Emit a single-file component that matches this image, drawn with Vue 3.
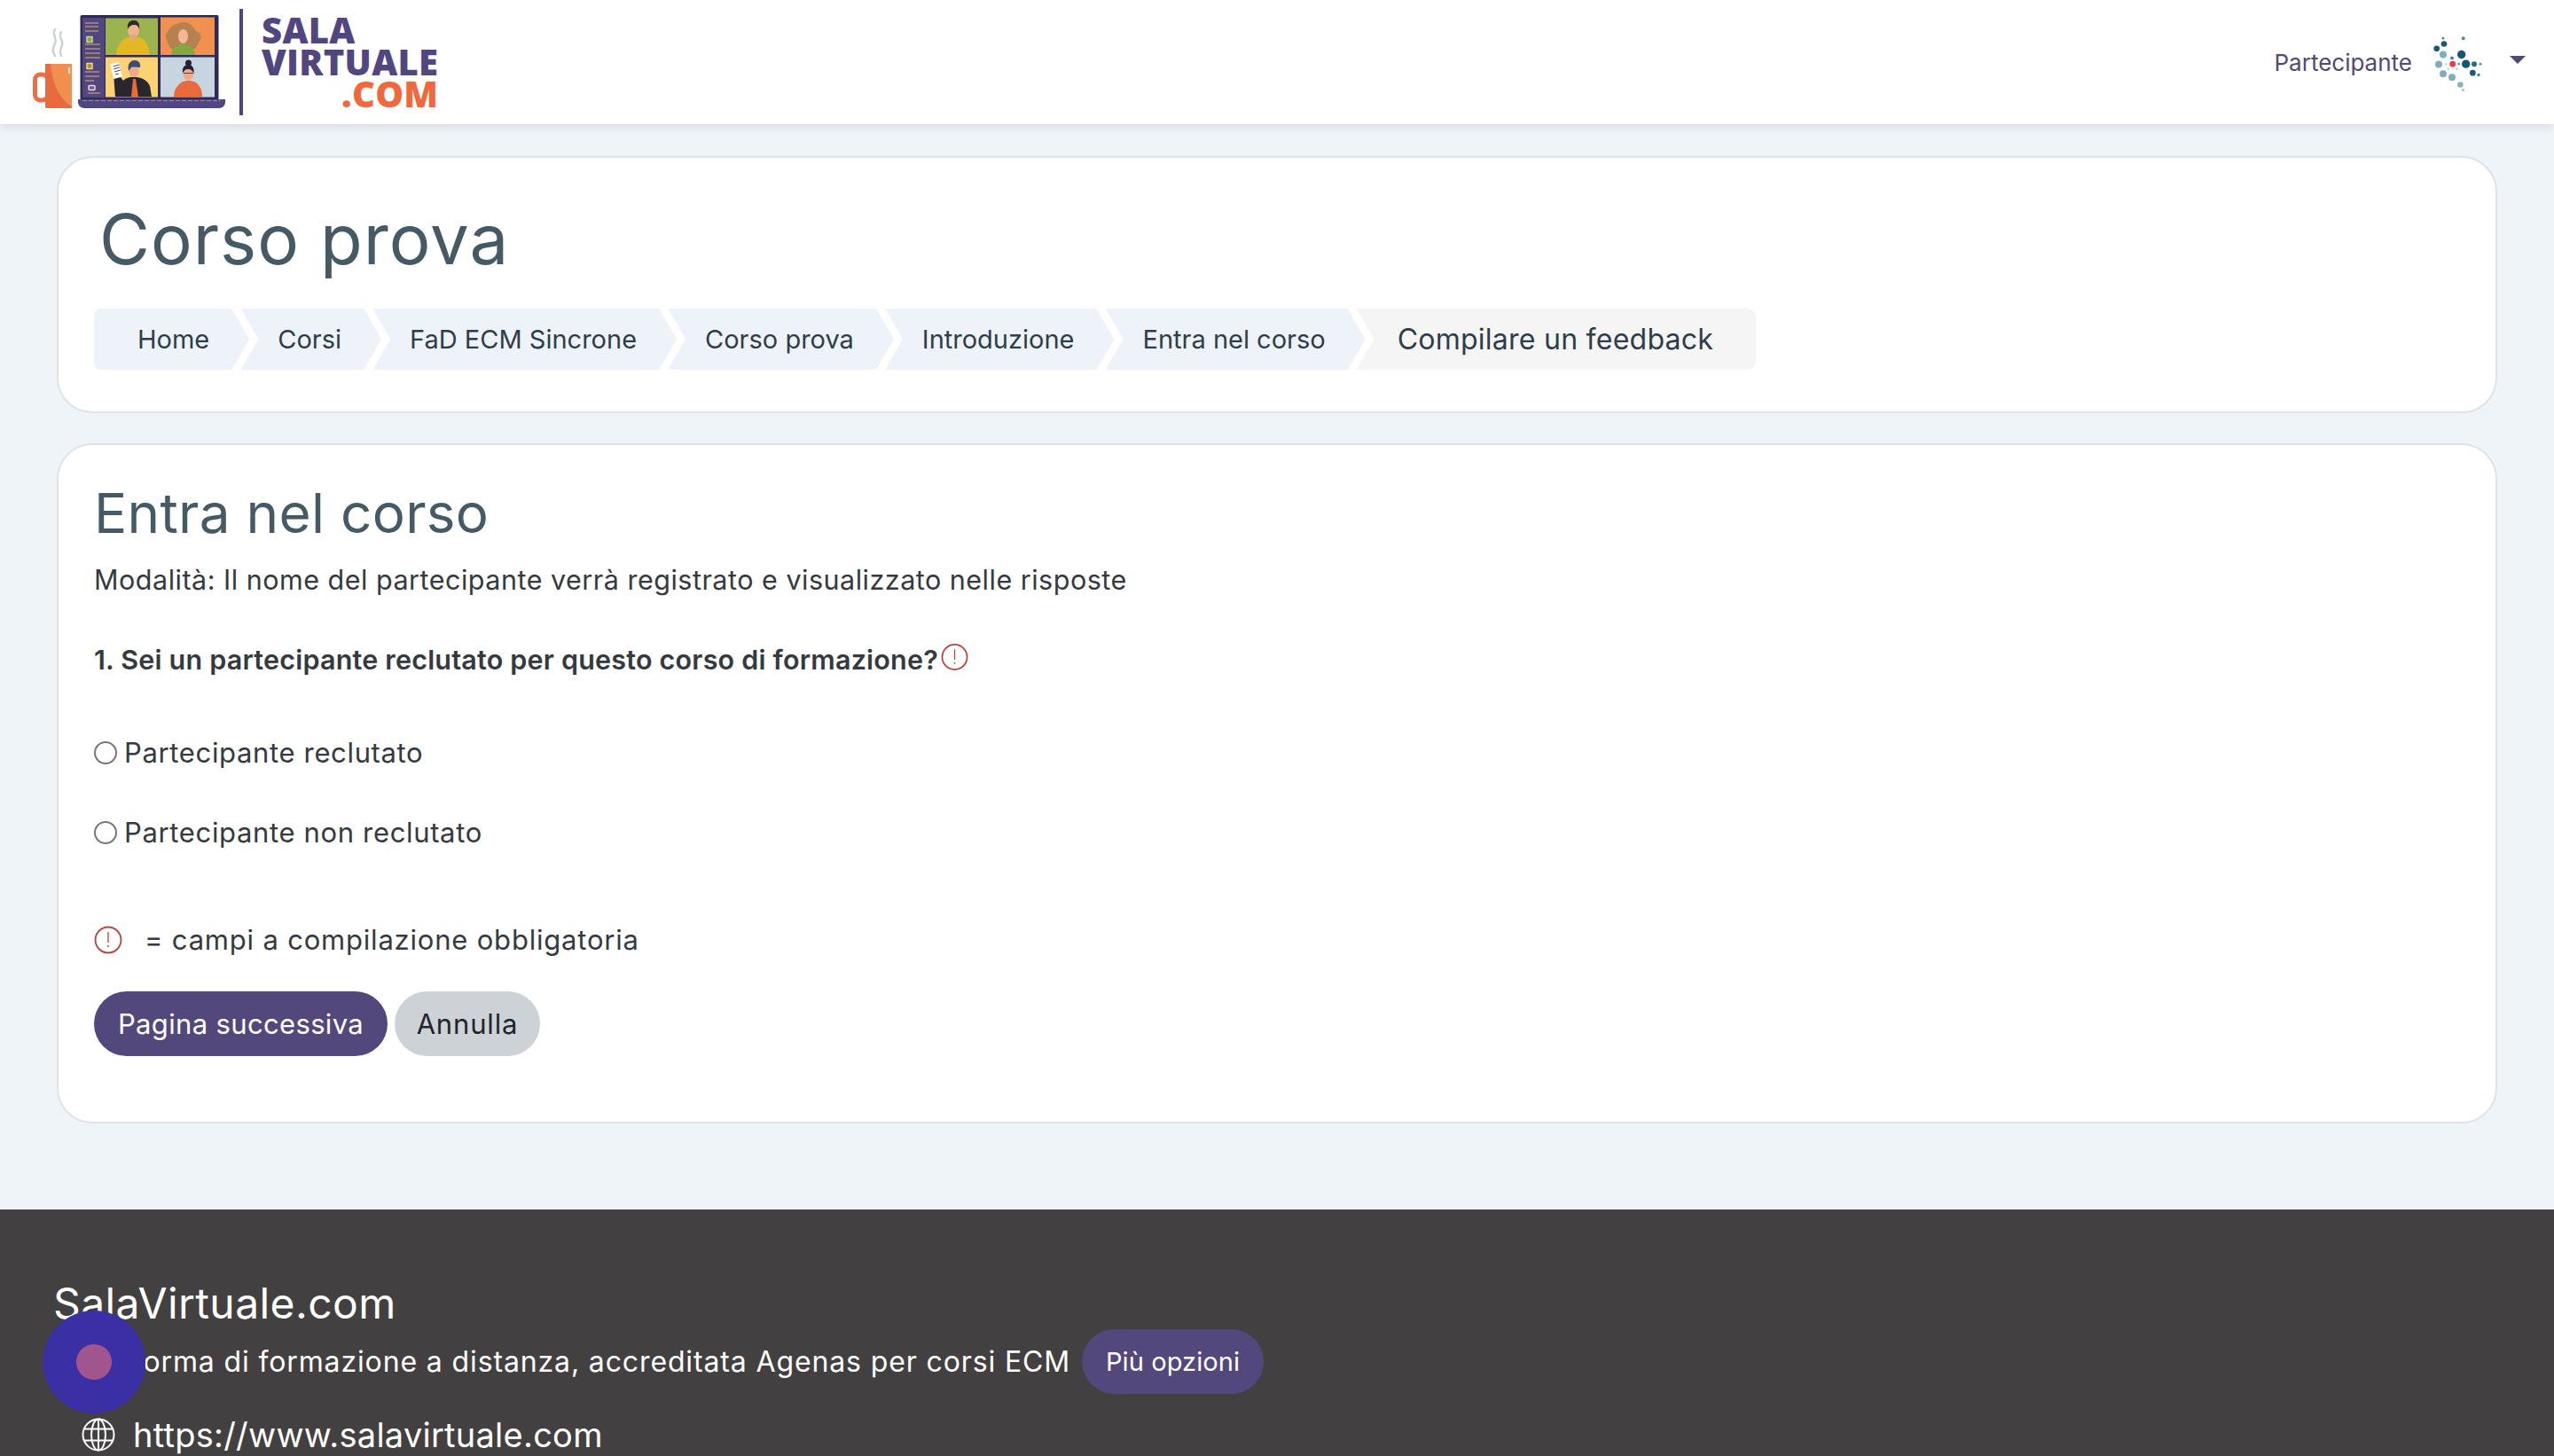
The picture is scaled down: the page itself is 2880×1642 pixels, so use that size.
<template>
  <div class="page">
    <!-- Top bar -->
    <header class="topbar">
      <a class="brand">
        <svg class="brand-art" viewBox="30 10 226 120" width="226" height="120">
          <!-- mug -->
          <path d="M62 33c-4 6 3 10 0 16s-3 9 0 14M69 36c-4 6 3 9 1 15s-3 6-1 12" fill="none" stroke="#c9d2d4" stroke-width="2.4" stroke-linecap="round" />
          <rect x="39.5" y="84" width="14" height="29" rx="6" fill="none" stroke="#ec6f43" stroke-width="5" />
          <path d="M51 72h30v50H53q-2 0-2-2z" fill="#f08f4f" />
          <path d="M51 72h6c2 20 8 38 24 48v2H53q-2 0-2-2z" fill="#ea6a3f" />
          <rect x="77" y="76" width="2" height="7" fill="#ffe6cf" />
          <!-- screen -->
          <rect x="90.5" y="17" width="156" height="96" rx="2" fill="#2f2a55" />
          <rect x="93" y="20" width="25" height="90" fill="#524680" />
          <g stroke="#b38f73" stroke-width="1.3">
            <path d="M96 26h15M96 30h15M96 35h15M96 50h17M96 55h17M96 60h17M96 65h17M96 81h16M96 86h16M96 91h10M99 105h14" />
          </g>
          <rect x="98" y="41.5" width="6" height="6" fill="#8aa64a" stroke="#c9d58a" stroke-width="1.5" />
          <rect x="98" y="71.5" width="6" height="6" fill="#a98f38" stroke="#f2d878" stroke-width="1.5" />
          <rect x="100" y="96.5" width="7" height="5" rx="1" fill="#6e5e92" stroke="#e7d5ea" stroke-width="1.5" />
          <rect x="119" y="20.5" width="59" height="41.5" fill="#9cb44e" />
          <rect x="181" y="19.5" width="61" height="42.5" fill="#f2914d" />
          <rect x="119" y="64.5" width="59" height="45" fill="#fbd274" />
          <rect x="181" y="64.5" width="61" height="45" fill="#c6d5df" />
          <!-- top left man -->
          <path d="M131 62c1-12 7-18 13-20h13c6 2 11 8 12 20z" fill="#e3b824" />
          <ellipse cx="150.5" cy="34" rx="6.5" ry="9" fill="#f2b18f" />
          <rect x="147.5" y="39" width="6" height="6" fill="#e9a382" />
          <path d="M144 33c-1-8 3-10 7-10s7 3 6 10c-1-4-3-5-6-5s-6 2-7 5z" fill="#2c2a33" />
          <!-- top right woman -->
          <path d="M207 25c8 0 11 6 14 10 7 2 7 9 3 12-1 7-6 10-10 9h-14c-5 2-11-3-11-9-3-3-3-8 0-11 2-6 10-11 18-11z" fill="#b5824f" />
          <path d="M193 62c1-8 6-11 11-12h5c5 1 10 4 11 12z" fill="#83a83e" />
          <ellipse cx="206.5" cy="41" rx="5.5" ry="8" fill="#f4b899" />
          <!-- bottom left man -->
          <path d="M130 109c-1-8-1-17-2-24l5-2 6 8c3-3 6-4 9-4h6c8 1 13 5 15 10l2 12z" fill="#2a2630" />
          <path d="M148 109l2-20h3l3 20z" fill="#ea6a3c" />
          <rect x="126" y="71" width="10" height="17" transform="rotate(-14 131 79)" fill="#fff" />
          <path d="M127.5 75l7-2M128 78l7-2M129 81l7-2M130 84l4-1" stroke="#4b4b62" stroke-width="1" />
          <ellipse cx="151" cy="80" rx="5.5" ry="7" fill="#f0a98a" />
          <path d="M145 80c-2-9 3-12 7-12s7 3 6 8c-3 0-8-1-10 0z" fill="#3d4a80" />
          <!-- bottom right woman -->
          <path d="M196 109c0-10 7-17 14-18h5c8 1 13 8 13 18z" fill="#e96b3d" />
          <circle cx="212.5" cy="71" r="3.5" fill="#262233" />
          <ellipse cx="212.5" cy="83" rx="6" ry="7.5" fill="#f1a98b" />
          <path d="M206 83c-1-8 3-10 6.500-10s7 3 6 10c-1-3-3-5-6.500-5s-5 2-6 5z" fill="#262233" />
          <path d="M207 82.5h11" stroke="#5d4a3e" stroke-width="1" />
          <!-- base -->
          <path d="M88 112h166v3c0 4-3 7-7 7H95c-4 0-7-3-7-7z" fill="#524680" />
          <path d="M93 113.5h156" stroke="#8d84ad" stroke-width="1" stroke-dasharray="5 2" />
        </svg>
        <span class="brand-sep"></span>
        <span class="brand-text">
          <span>SALA</span>
          <span>VIRTUALE</span>
          <span class="brand-com">.COM</span>
        </span>
      </a>
      <div class="usermenu">
        <span class="username">Partecipante</span>
        <svg class="avatar" viewBox="720 110 180 200" width="60" height="67">
          <circle v-for="(d, i) in dots" :key="i" :cx="d[0]" :cy="d[1]" :r="d[2]" :fill="d[3]" />
        </svg>
        <span class="caret"></span>
      </div>
    </header>

    <main class="content">
      <section class="card card-head">
        <h1>Corso prova</h1>
        <ol class="crumbs">
          <li v-for="(c, i) in crumbs" :key="c" :class="{ first: i === 0, last: i === crumbs.length - 1 }">{{ c }}</li>
        </ol>
      </section>

      <section class="card card-form">
        <h2>Entra nel corso</h2>
        <p class="mode">Modalità: Il nome del partecipante verrà registrato e visualizzato nelle risposte</p>
        <p class="question">
          <span>1. Sei un partecipante reclutato per questo corso di formazione?</span>
          <svg class="req" viewBox="0 0 32 32" width="31" height="32">
            <circle cx="16" cy="16" r="14.5" fill="none" stroke="#b8423f" stroke-width="1.8" />
            <path d="M16 7v12" stroke="#b8423f" stroke-width="1.3" />
            <circle cx="16" cy="23" r="1" fill="#b8423f" />
          </svg>
        </p>
        <label class="option first-option"><span class="radio"></span>Partecipante reclutato</label>
        <label class="option second-option"><span class="radio"></span>Partecipante non reclutato</label>
        <p class="legend">
          <svg class="req" viewBox="0 0 32 32" width="32" height="32">
            <circle cx="16" cy="16" r="14.5" fill="none" stroke="#b8423f" stroke-width="1.8" />
            <path d="M16 7v12" stroke="#b8423f" stroke-width="1.3" />
            <circle cx="16" cy="23" r="1" fill="#b8423f" />
          </svg>
          <span>= campi a compilazione obbligatoria</span>
        </p>
        <div class="actions">
          <button class="btn btn-next">Pagina successiva</button>
          <button class="btn btn-cancel">Annulla</button>
        </div>
      </section>
    </main>

    <footer class="footer">
      <div class="foot-title">SalaVirtuale.com</div>
      <div class="foot-desc">
        <span>Piattaforma di formazione a distanza, accreditata Agenas per corsi ECM</span>
        <button class="btn btn-more">Più opzioni</button>
      </div>
      <div class="foot-link">
        <svg viewBox="0 0 38 38" width="38" height="38" fill="none" stroke="#fff" stroke-width="2">
          <circle cx="19" cy="19" r="17.5" />
          <ellipse cx="19" cy="19" rx="8" ry="17.5" />
          <path d="M19 1.5v35M3 12.5h32M3 25.5h32" />
        </svg>
        <span>https://www.salavirtuale.com</span>
      </div>
    </footer>

    <!-- floating widget -->
    <div class="fab"><span></span></div>
  </div>
</template>

<script setup>
const crumbs = [
  'Home',
  'Corsi',
  'FaD ECM Sincrone',
  'Corso prova',
  'Introduzione',
  'Entra nel corso',
  'Compilare un feedback'
]

// avatar cluster, x / y / radius / colour
const dots = [
  [765, 128, 4, '#4a7a8a'], [833, 128, 6, '#5a8494'], [768, 147, 10, '#1f5a73'],
  [743, 163, 10, '#1d5670'], [765, 183, 12, '#7fadc0'], [827, 183, 14, '#175670'],
  [795, 195, 6, '#4a7f95'], [750, 216, 12, '#82abbd'], [842, 215, 14, '#175670'],
  [870, 215, 9, '#2a6980'], [891, 215, 5, '#6fa0b0'], [765, 248, 12, '#82adbe'],
  [795, 260, 12, '#82adbe'], [865, 245, 10, '#1f5a73'], [885, 252, 5, '#4a7f95'],
  [823, 285, 10, '#8ab2c3'], [832, 303, 4, '#8ab2c3'], [775, 215, 3, '#9bbccb'],
  [818, 215, 4, '#5f93a8'], [782, 232, 3, '#9bbccb'], [812, 232, 3, '#9bbccb'],
  [797, 215, 10, '#ee3a3f']
]
</script>

<style>
body {
  background: #eff4f9;
}
</style>

<style scoped>
.page {
  position: relative;
  height: 1642px;
  overflow: hidden;
  background: #eff4f9;
  font-family: Inter, "Liberation Sans", sans-serif;
  color: #343a40;
}

.topbar {
  display: flex;
  align-items: center;
  justify-content: space-between;
  height: 140px;
  padding: 0 32px 0 30px;
  box-sizing: border-box;
  background: #fff;
  box-shadow: 0 2px 12px rgba(0, 0, 0, 0.12);
}

.brand {
  display: flex;
  align-items: center;
}

.brand-sep {
  width: 4px;
  height: 120px;
  margin: 0 21px 0 14px;
  background: #524680;
}

.brand-text {
  display: flex;
  flex-direction: column;
  font-family: "Open Sans", sans-serif;
  font-weight: 800;
  font-size: 40px;
  line-height: 36px;
  color: #524680;
  letter-spacing: 0.3px;
}

.brand-com {
  text-align: right;
  color: #ee6a3c;
}

.usermenu {
  display: flex;
  align-items: center;
  color: #4f4a75;
  font-size: 26px;
}

.username {
  margin-right: 20px;
}

.caret {
  width: 0;
  height: 0;
  margin-left: 30px;
  margin-bottom: 6px;
  border-left: 9px solid transparent;
  border-right: 9px solid transparent;
  border-top: 9px solid #524680;
}

.content {
  padding: 36px 64px 97px;
}

.card {
  background: #fff;
  border: 2px solid #dfe3e8;
  border-radius: 40px;
  padding: 0 40px;
}

.card-head {
  height: 290px;
  box-sizing: border-box;
  padding-top: 42px;
}

h1 {
  margin: 0 0 28px 6px;
  font-size: 78px;
  font-weight: 400;
  letter-spacing: 1px;
  line-height: 100px;
  color: #455a64;
}

.crumbs {
  display: flex;
  margin: 0;
  padding: 0;
  list-style: none;
  font-size: 29px;
  line-height: 69px;
  color: #2f3d4a;
}

.crumbs li {
  height: 69px;
  padding: 0 45px 0 42px;
  margin-right: -10px;
  background: #eef3f9;
  clip-path: polygon(0 0, calc(100% - 20px) 0, 100% 50%, calc(100% - 20px) 100%, 0 100%, 20px 50%);
}

.crumbs li.first {
  padding-left: 49px;
  border-radius: 8px 0 0 8px;
  clip-path: polygon(0 0, calc(100% - 20px) 0, 100% 50%, calc(100% - 20px) 100%, 0 100%);
}

.crumbs li.last {
  padding: 0 48px 0 46px;
  margin-right: 0;
  font-size: 32px;
  letter-spacing: 0.25px;
  background: #f5f5f5;
  border-radius: 0 10px 10px 0;
  clip-path: polygon(0 0, 100% 0, 100% 100%, 0 100%, 20px 50%);
}

.card-form {
  margin-top: 34px;
  padding-top: 37px;
  padding-bottom: 74px;
}

h2 {
  margin: 0;
  font-size: 62px;
  font-weight: 400;
  letter-spacing: 0.3px;
  line-height: 80px;
  color: #455a64;
}

.mode,
.question,
.option,
.legend {
  display: flex;
  align-items: center;
  margin: 0;
  font-size: 31px;
  line-height: 44px;
}

.mode {
  margin-top: 13px;
  font-size: 30.5px;
  letter-spacing: 0.5px;
}

.question {
  margin-top: 46px;
  font-size: 30.5px;
  font-weight: 600;
  letter-spacing: 0.2px;
}

.question .req {
  margin: -6px 0 0 3px;
}

.option {
  letter-spacing: 0.65px;
}

.first-option {
  margin-top: 61px;
}

.second-option {
  margin-top: 46px;
}

.radio {
  width: 26px;
  height: 26px;
  margin-right: 8px;
  box-sizing: border-box;
  border: 2px solid #767676;
  border-radius: 50%;
}

.legend {
  margin-top: 77px;
  gap: 25px;
  letter-spacing: 0.8px;
}

.actions {
  display: flex;
  gap: 8px;
  margin-top: 36px;
}

.btn {
  height: 73px;
  border: 0;
  border-radius: 37px;
  font-family: inherit;
  font-size: 31px;
}

.btn-next {
  width: 331px;
  background: #52487b;
  color: #fff;
  letter-spacing: 0.35px;
}

.btn-cancel {
  width: 164px;
  background: #cdd2d7;
  color: #212529;
  letter-spacing: 0.85px;
}

.footer {
  height: 400px;
  padding: 76px 0 0 60px;
  background: #424041;
  color: #fff;
}

.foot-title {
  font-size: 48px;
  line-height: 60px;
  letter-spacing: 0.4px;
}

.foot-desc {
  display: flex;
  align-items: center;
  gap: 13px;
  margin-top: -1px;
  font-size: 32px;
  letter-spacing: 0.87px;
}

.btn-more {
  width: 205px;
  background: #52487b;
  color: #fff;
  font-size: 29px;
  letter-spacing: 0.1px;
}

.foot-link {
  display: flex;
  align-items: center;
  gap: 20px;
  margin: 21px 0 0 32px;
  font-size: 38px;
  line-height: 50px;
  letter-spacing: 0.25px;
}

.fab {
  position: absolute;
  left: 48px;
  top: 1478px;
  display: flex;
  align-items: center;
  justify-content: center;
  width: 116px;
  height: 116px;
  border-radius: 50%;
  background: #3a2fa5;
}

.fab span {
  width: 40px;
  height: 40px;
  border-radius: 50%;
  background: #a0558f;
}
</style>
